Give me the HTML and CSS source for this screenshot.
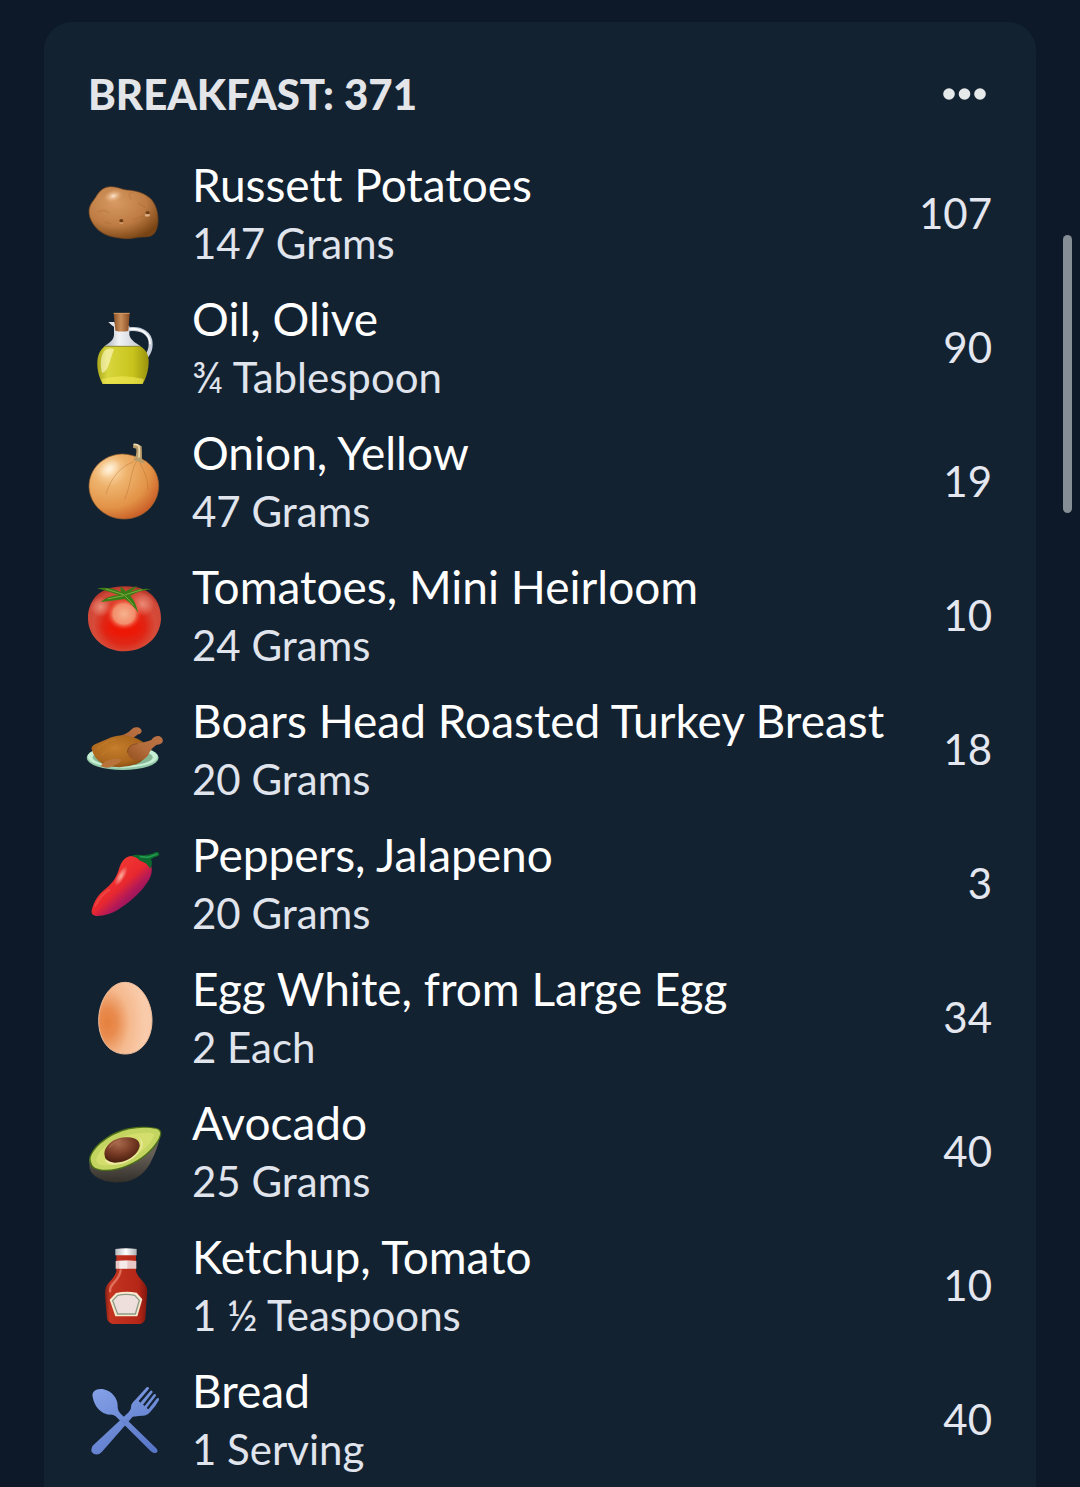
FILE: index.html
```html
<!DOCTYPE html>
<html lang="en">
<head>
    <meta charset="UTF-8">
    <meta name="viewport" content="width=device-width, initial-scale=1.0">
    <title>Food Log</title>
    <link rel="stylesheet" href="styles.css">
</head>
<body>
    <main class="meal-card">
        <header class="meal-header">
            <h1 class="meal-title">BREAKFAST: 371</h1>
            <button type="button" class="more-button" aria-label="More options">
                <svg width="50" height="24" viewBox="0 0 50 24" fill="currentColor" aria-hidden="true">
                    <circle cx="7" cy="12" r="5.8"/>
                    <circle cx="22.5" cy="12" r="5.8"/>
                    <circle cx="38" cy="12" r="5.8"/>
                </svg>
            </button>
        </header>

        <ul class="food-list">
            <li class="food">
                <svg class="food-icon" viewBox="54 13 228 252" aria-hidden="true">
                    <defs>
                        <radialGradient id="potatoSkin" cx="0.38" cy="0.3" r="0.75">
                            <stop offset="0" stop-color="#d79a62"/>
                            <stop offset="0.6" stop-color="#bd7b43"/>
                            <stop offset="1" stop-color="#784413"/>
                        </radialGradient>
                        <radialGradient id="potatoShine">
                            <stop offset="0" stop-color="#ffe6cf"/>
                            <stop offset="1" stop-color="#e0a873" stop-opacity="0"/>
                        </radialGradient>
                    </defs>
                    <path d="M57 128C57 108 70 97 78 84C88 66 102 54 122 54C140 53 152 61 170 64C196 65 224 73 243 91C258 108 265 132 264 158C263 179 256 197 242 202C226 207 208 203 192 208C170 213 148 208 126 204C102 199 82 186 68 164C60 151 57 140 57 128Z" fill="url(#potatoSkin)" stroke="#70421c" stroke-width="2"/>
                    <ellipse cx="130" cy="82" rx="30" ry="19" fill="url(#potatoShine)" transform="rotate(-18 130 82)"/>
                    <path d="M84 130q20-9 33 2M183 91q-12-18 4-20M206 104l20 12M190 153l28-10M105 161l17 4" fill="none" stroke="#8d5628" stroke-width="5" stroke-linecap="round" opacity="0.16"/>
                    <ellipse cx="154" cy="163" rx="6" ry="3" fill="#d49a68"/>
                    <ellipse cx="154" cy="156" rx="6" ry="5" fill="#6b3c16"/>
                    <ellipse cx="232" cy="140" rx="8" ry="4" fill="#dcae84"/>
                    <ellipse cx="233" cy="132" rx="6" ry="4" fill="#6b3c16"/>
                </svg>
                <div class="food-text">
                    <h2 class="food-name">Russett Potatoes</h2>
                    <p class="food-amount">147 Grams</p>
                </div>
                <span class="calories">107</span>
            </li>
            <li class="food">
                <svg class="food-icon" viewBox="54 24 228 252" aria-hidden="true">
                    <defs>
                        <linearGradient id="oilFill">
                            <stop offset="0" stop-color="#aaa81c"/>
                            <stop offset="0.2" stop-color="#d8d63e"/>
                            <stop offset="0.7" stop-color="#c8c31c"/>
                            <stop offset="1" stop-color="#99920f"/>
                        </linearGradient>
                        <linearGradient id="oilGlass">
                            <stop offset="0" stop-color="#a8afba"/>
                            <stop offset="0.4" stop-color="#f0f2f5"/>
                            <stop offset="1" stop-color="#c6cbd3"/>
                        </linearGradient>
                        <linearGradient id="oilCork">
                            <stop offset="0" stop-color="#8d5126"/>
                            <stop offset="0.45" stop-color="#c98f5a"/>
                            <stop offset="1" stop-color="#8a4c22"/>
                        </linearGradient>
                    </defs>
                    <path d="M175 91C215 86 243 103 242 136C242 152 237 162 230 171" fill="none" stroke="#c9d0db" stroke-width="12"/>
                    <path d="M178 90C213 86 241 104 240 136" fill="none" stroke="#fff" stroke-width="5"/>
                    <path d="M115 69L134 69L136 86Q126 81 115 69Z" fill="#e3e7ed"/>
                    <path d="M132 80H178V108C183 125 197 131 212 142H103C118 132 131 123 132 108Z" fill="url(#oilGlass)"/>
                    <path d="M105 141H210C228 152 236 167 236 187C236 213 229 236 218 255H98C88 236 81 215 82 188C83 166 91 152 105 141Z" fill="url(#oilFill)"/>
                    <path d="M105 142H210" stroke="#8d8c35" stroke-width="3"/>
                    <path d="M106 153C93 165 89 192 96 222C116 218 118 187 132 151Q118 145 106 153Z" fill="#fffbd0" opacity="0.6"/>
                    <path d="M96 240Q158 224 221 240L218 254H98Z" fill="#f4ea57" opacity="0.6"/>
                    <path d="M131 42H179L175 96Q154 100 136 95Z" fill="url(#oilCork)"/>
                    <path d="M131 43H179" stroke="#d39a66" stroke-width="3"/>
                </svg>
                <div class="food-text">
                    <h2 class="food-name">Oil, Olive</h2>
                    <p class="food-amount">¾ Tablespoon</p>
                </div>
                <span class="calories">90</span>
            </li>
            <li class="food">
                <svg class="food-icon" viewBox="54 21 228 252" aria-hidden="true">
                    <defs>
                        <radialGradient id="onionSkin" cx="0.3" cy="0.25" r="0.82">
                            <stop offset="0" stop-color="#ffe1b6"/>
                            <stop offset="0.3" stop-color="#eeb36d"/>
                            <stop offset="0.7" stop-color="#e29347"/>
                            <stop offset="1" stop-color="#c85b25"/>
                        </radialGradient>
                        <radialGradient id="onionShine">
                            <stop offset="0" stop-color="#fff6e4" stop-opacity="0.8"/>
                            <stop offset="1" stop-color="#fff6e4" stop-opacity="0"/>
                        </radialGradient>
                    </defs>
                    <path d="M57 158C57 104 100 62 157 60C178 60 196 67 216 75C249 92 266 121 266 156C265 212 220 255 162 255C103 254 59 211 57 158Z" fill="url(#onionSkin)" stroke="#98602d" stroke-width="2"/>
                    <path d="M190 84C158 94 124 126 108 180M200 82C182 110 184 150 164 196M209 82C216 106 236 126 233 168" fill="none" stroke="#b46e30" stroke-width="3" opacity="0.4"/>
                    <ellipse cx="118" cy="104" rx="36" ry="23" fill="url(#onionShine)" transform="rotate(-36 118 104)"/>
                    <path d="M190 30Q202 28 215 37Q216 54 216 76Q221 84 226 89Q207 84 189 78Q201 68 199 44L189 41Z" fill="#b89b6a"/>
                    <path d="M191 31Q202 30 207 37Q209 55 207 71" fill="none" stroke="#ead9ae" stroke-width="5"/>
                </svg>
                <div class="food-text">
                    <h2 class="food-name">Onion, Yellow</h2>
                    <p class="food-amount">47 Grams</p>
                </div>
                <span class="calories">19</span>
            </li>
            <li class="food">
                <svg class="food-icon" viewBox="54 16 228 252" aria-hidden="true">
                    <defs>
                        <radialGradient id="tomatoSkin" cx="0.5" cy="0.6" r="0.62">
                            <stop offset="0" stop-color="#e62a16"/>
                            <stop offset="0.45" stop-color="#e02515"/>
                            <stop offset="0.68" stop-color="#d64a38"/>
                            <stop offset="0.86" stop-color="#cf4838"/>
                            <stop offset="1" stop-color="#a83027"/>
                        </radialGradient>
                        <radialGradient id="tomatoGlow" cy="0.45">
                            <stop offset="0" stop-color="#f6b28e"/>
                            <stop offset="0.6" stop-color="#f38d6b"/>
                            <stop offset="1" stop-color="#ec2a15" stop-opacity="0"/>
                        </radialGradient>
                        <radialGradient id="tomatoShade">
                            <stop offset="0" stop-color="#f01200"/>
                            <stop offset="0.6" stop-color="#ec1806" stop-opacity="0.8"/>
                            <stop offset="1" stop-color="#e02515" stop-opacity="0"/>
                        </radialGradient>
                        <radialGradient id="tomatoShine">
                            <stop offset="0" stop-color="#f5ae9a" stop-opacity="0.65"/>
                            <stop offset="1" stop-color="#f5ae9a" stop-opacity="0"/>
                        </radialGradient>
                    </defs>
                    <path d="M54 147C54 96 83 61 132 53Q165 47 199 53C245 61 273 98 273 146C272 202 225 245 164 245C101 244 55 202 54 147Z" fill="url(#tomatoSkin)"/>
                    <ellipse cx="162" cy="173" rx="76" ry="46" fill="url(#tomatoShade)"/>
                    <ellipse cx="162" cy="138" rx="54" ry="50" fill="url(#tomatoGlow)"/>
                    <ellipse cx="218" cy="104" rx="36" ry="36" fill="url(#tomatoShine)"/>
                    <ellipse cx="92" cy="112" rx="32" ry="30" fill="url(#tomatoShine)"/>
                    <path d="M81 56Q118 50 152 67Q152 56 151 51Q163 57 166 65Q184 54 202 48Q194 59 180 66Q209 54 245 58Q209 62 181 78Q196 94 205 130Q189 105 165 88Q130 92 92 97Q111 79 147 76Q114 65 81 56Z" fill="#397d16"/>
                    <path d="M107 58L162 75L191 107M161 78L113 88M166 75L216 60" fill="none" stroke="#8fb548" stroke-width="3" opacity="0.8"/>
                </svg>
                <div class="food-text">
                    <h2 class="food-name">Tomatoes, Mini Heirloom</h2>
                    <p class="food-amount">24 Grams</p>
                </div>
                <span class="calories">10</span>
            </li>
            <li class="food">
                <svg class="food-icon" viewBox="54 -3 228 252" aria-hidden="true">
                    <defs>
                        <radialGradient id="turkeySkin" cx="0.42" cy="0.4" r="0.75">
                            <stop offset="0" stop-color="#c47d2a"/>
                            <stop offset="0.6" stop-color="#ad671e"/>
                            <stop offset="1" stop-color="#74400f"/>
                        </radialGradient>
                        <linearGradient id="turkeyLeg" x1="0" y1="1" x2="1" y2="0">
                            <stop offset="0" stop-color="#93501f"/>
                            <stop offset="0.5" stop-color="#b46c3c"/>
                            <stop offset="1" stop-color="#ba7145"/>
                        </linearGradient>
                    </defs>
                    <ellipse cx="158" cy="143" rx="108" ry="37" fill="#93c9a8"/>
                    <ellipse cx="158" cy="140" rx="105" ry="33" fill="#c6efd4"/>
                    <ellipse cx="158" cy="142" rx="90" ry="25" fill="#86b896"/>
                    <path d="M139 80Q169 75 186 57Q191 50 203 52Q214 55 215 63Q214 72 204 73Q191 81 178 98Z" fill="url(#turkeyLeg)"/>
                    <path d="M65 118Q63 109 75 103L112 87Q143 70 184 80Q225 88 233 122Q228 150 198 163Q151 179 109 166Q75 155 65 118Z" fill="url(#turkeySkin)"/>
                    <path d="M172 126Q174 105 196 100Q224 99 244 90Q252 77 267 78Q281 84 278 95Q275 103 260 104Q243 114 235 135Q224 153 199 152Q176 147 172 126Z" fill="url(#turkeyLeg)"/>
                    <path d="M92 169Q101 153 119 149Q138 143 155 149Q148 161 130 167Q114 178 92 169Z" fill="#b8733b"/>
                    <path d="M172 128Q173 103 203 101" fill="none" stroke="#7a4214" stroke-width="3" opacity="0.7"/>
                    <path d="M80 119Q102 95 138 87M94 137L107 125M124 118L140 106" fill="none" stroke="#d7943e" stroke-width="3" opacity="0.3"/>
                </svg>
                <div class="food-text">
                    <h2 class="food-name">Boars Head Roasted Turkey Breast</h2>
                    <p class="food-amount">20 Grams</p>
                </div>
                <span class="calories">18</span>
            </li>
            <li class="food">
                <svg class="food-icon" viewBox="54 9 228 252" aria-hidden="true">
                    <defs>
                        <linearGradient id="pepperSkin" x1="0.25" y1="0.2" x2="0.8" y2="0.8">
                            <stop offset="0" stop-color="#f43a32"/>
                            <stop offset="0.48" stop-color="#e8282f"/>
                            <stop offset="0.7" stop-color="#b31958"/>
                            <stop offset="1" stop-color="#80105f"/>
                        </linearGradient>
                        <radialGradient id="pepperShine">
                            <stop offset="0" stop-color="#ffc0ad" stop-opacity="0.9"/>
                            <stop offset="1" stop-color="#ffc0ad" stop-opacity="0"/>
                        </radialGradient>
                    </defs>
                    <path d="M178 49C162 53 153 69 147 87C137 120 124 132 99 153C78 171 69 194 65 212C64 222 69 227 82 228C104 227 124 222 143 210C178 188 207 163 228 133C243 113 249 94 243 75C232 50 208 43 178 49Z" fill="url(#pepperSkin)"/>
                    <ellipse cx="153" cy="108" rx="34" ry="12" fill="url(#pepperShine)" transform="rotate(-60 153 108)"/>
                    <path d="M76 197Q92 164 118 150" fill="none" stroke="#ff7967" stroke-width="6" stroke-linecap="round" opacity="0.3"/>
                    <path d="M184 48Q194 43 213 45Q231 47 251 40Q256 34 265 37Q272 45 263 49Q254 50 243 58Q250 70 240 86Q231 67 210 62Q201 51 184 48Z" fill="#0d692e"/>
                    <path d="M209 50L234 52L262 42" fill="none" stroke="#249b50" stroke-width="5"/>
                </svg>
                <div class="food-text">
                    <h2 class="food-name">Peppers, Jalapeno</h2>
                    <p class="food-amount">20 Grams</p>
                </div>
                <span class="calories">3</span>
            </li>
            <li class="food">
                <svg class="food-icon" viewBox="54 21 228 252" aria-hidden="true">
                    <defs>
                        <radialGradient id="eggShell" gradientUnits="userSpaceOnUse" cx="0" cy="0" r="1" gradientTransform="translate(112 158) scale(112 170)">
                            <stop offset="0" stop-color="#e5803f"/>
                            <stop offset="0.25" stop-color="#e98c4f"/>
                            <stop offset="0.6" stop-color="#f5b98e"/>
                            <stop offset="1" stop-color="#f9cbaa"/>
                        </radialGradient>
                    </defs>
                    <path d="M165 37C120 37 86 94 86 151C86 212 119 252 166 252C213 252 246 209 246 151C246 94 211 37 165 37Z" fill="url(#eggShell)" stroke="#eebd9a" stroke-width="3"/>
                </svg>
                <div class="food-text">
                    <h2 class="food-name">Egg White, from Large Egg</h2>
                    <p class="food-amount">2 Each</p>
                </div>
                <span class="calories">34</span>
            </li>
            <li class="food">
                <svg class="food-icon" viewBox="54 2 228 252" aria-hidden="true">
                    <defs>
                        <linearGradient id="avocadoSkin" x1="0" y1="0" x2="0" y2="1">
                            <stop offset="0.4" stop-color="#666057"/>
                            <stop offset="1" stop-color="#332f2a"/>
                        </linearGradient>
                        <radialGradient id="avocadoPit" cx="0.4" cy="0.25" r="0.8">
                            <stop offset="0" stop-color="#a8694c"/>
                            <stop offset="0.5" stop-color="#793c25"/>
                            <stop offset="1" stop-color="#42180c"/>
                        </radialGradient>
                    </defs>
                    <path d="M57 148L270 72C268 99 256 130 240 160C222 192 191 214 151 216C104 219 64 199 59 174Z" fill="url(#avocadoSkin)"/>
                    <path d="M58 154C53 127 92 86 137 66C175 48 224 46 260 53C278 58 277 73 266 92C248 124 216 150 175 167C138 185 94 186 72 175Q61 168 58 154Z" fill="#4c6f18"/>
                    <path d="M62 149C60 127 93 92 137 71C174 53 221 48 259 56C275 61 272 75 262 91C244 120 214 146 174 163C137 180 94 182 75 172Q64 165 62 149Z" fill="#c3d560"/>
                    <path d="M80 144C87 116 128 86 166 77C205 65 247 65 253 72C246 102 206 135 170 148C133 165 98 170 84 160Q77 155 80 144Z" fill="#d3de6c"/>
                    <path d="M112 149C145 169 185 148 210 118Q219 99 207 84Q224 93 215 114C200 143 165 166 127 163Q110 160 104 149Z" fill="#f0e9a4"/>
                    <path d="M103 131C103 106 130 83 165 81C194 78 210 89 209 107C203 136 168 157 134 157Q104 155 103 131Z" fill="url(#avocadoPit)"/>
                    <path d="M118 113Q130 94 153 89" fill="none" stroke="#c48362" stroke-width="4" opacity="0.4"/>
                </svg>
                <div class="food-text">
                    <h2 class="food-name">Avocado</h2>
                    <p class="food-amount">25 Grams</p>
                </div>
                <span class="calories">40</span>
            </li>
            <li class="food">
                <svg class="food-icon" viewBox="54 27 228 252" aria-hidden="true">
                    <defs>
                        <linearGradient id="ketchupGlass">
                            <stop offset="0" stop-color="#7c1f13"/>
                            <stop offset="0.12" stop-color="#c43420"/>
                            <stop offset="0.8" stop-color="#b42617"/>
                            <stop offset="1" stop-color="#7f170f"/>
                        </linearGradient>
                        <linearGradient id="ketchupCap">
                            <stop offset="0" stop-color="#b7babd"/>
                            <stop offset="0.5" stop-color="#fff"/>
                            <stop offset="1" stop-color="#aeb0b4"/>
                        </linearGradient>
                    </defs>
                    <path d="M139 55H198V106C202 122 222 137 229 152Q233 161 231 176L226 247Q225 260 211 264H127Q113 260 111 247L105 176Q104 161 109 151C117 137 136 123 139 106Z" fill="url(#ketchupGlass)"/>
                    <path d="M152 103Q150 121 130 142Q120 152 120 166" fill="none" stroke="#ffad96" stroke-width="7" stroke-linecap="round" opacity="0.5"/>
                    <path d="M137 75Q168 70 199 75V98H137Z" fill="#e9c9c7"/>
                    <path d="M148 75H172V98H148Z" fill="#fff" opacity="0.6"/>
                    <path d="M136 39Q168 34 200 39V58H136Z" fill="url(#ketchupCap)"/>
                    <path d="M138 171Q168 164 200 170L217 190L202 241H136L119 191Z" fill="#f8e8ce"/>
                    <path d="M143 178Q168 172 194 178L208 193L196 234H143L128 194Z" fill="#eedfdd" stroke="#8b9b84" stroke-width="4"/>
                </svg>
                <div class="food-text">
                    <h2 class="food-name">Ketchup, Tomato</h2>
                    <p class="food-amount">1 ½ Teaspoons</p>
                </div>
                <span class="calories">10</span>
            </li>
            <li class="food">
                <svg class="food-icon" viewBox="54 24 228 252" aria-hidden="true">
                    <defs>
                        <linearGradient id="cutlery" gradientUnits="userSpaceOnUse" x1="100" y1="50" x2="210" y2="250">
                            <stop offset="0" stop-color="#839fe6"/>
                            <stop offset="1" stop-color="#5977c8"/>
                        </linearGradient>
                    </defs>
                    <g fill="url(#cutlery)">
                        <path d="M230 49Q237 46 237 53L206 90L211 95L241 60Q247 56 248 64L219 101L224 105L252 70Q258 67 258 74L230 111L235 115L261 82Q268 79 267 87Q257 106 240 124Q230 136 214 134L188 137L96 242Q86 254 72 249Q58 241 68 224L176 124Q185 112 184 101Q190 91 198 84Z"/>
                        <path d="M68 78C64 59 82 51 101 55C126 61 143 82 143 104Q142 118 152 128L258 231Q267 241 259 245Q250 248 241 239L137 136Q130 130 117 131C94 129 73 107 68 78Z"/>
                    </g>
                    <path d="M151 143L164 157L176 143" fill="none" stroke="#405fa9" stroke-width="2" opacity="0.4"/>
                </svg>
                <div class="food-text">
                    <h2 class="food-name">Bread</h2>
                    <p class="food-amount">1 Serving</p>
                </div>
                <span class="calories">40</span>
            </li>
        </ul>
    </main>
    <div class="scroll-thumb" aria-hidden="true"></div>
</body>
</html>
```

FILE: styles.css
```css
* {
    box-sizing: border-box;
}
body {
    display: flex;
    flex-direction: column;
    min-height: 100vh;
    margin: 0;
    padding: 22px 44px 0;
    background: #0d1928;
    color: #fff;
    font-family: Lato, "Noto Sans", sans-serif;
    font-variant-ligatures: none;
}
h1, h2, p {
    margin: 0;
}
.meal-card {
    flex: 1;
    padding: 44px 44px 0;
    background: #132231;
    border-radius: 28px 28px 0 0;
}
.meal-header {
    display: flex;
    align-items: center;
    justify-content: space-between;
    margin-bottom: 35px;
}
.meal-title {
    color: #e3e5e9;
    font-size: 42px;
    font-weight: 900;
    line-height: 56px;
}
.more-button {
    padding: 0;
    border: none;
    background: none;
    color: #e6e9ea;
    cursor: pointer;
}
.more-button svg {
    display: block;
}
.food-list {
    display: flex;
    flex-direction: column;
    gap: 18px;
    margin: 0;
    padding: 0;
    list-style: none;
}
.food {
    display: flex;
    align-items: center;
    gap: 28px;
}
.food-icon {
    flex: none;
    width: 76px;
    height: 84px;
    overflow: visible;
}
.food-text {
    flex: 1;
}
.food-name {
    font-size: 46px;
    font-weight: 400;
    line-height: 56px;
}
.food-amount {
    color: #e0e4ec;
    font-size: 42px;
    line-height: 60px;
}
.calories {
    padding-bottom: 4px;
    color: #e4e7ef;
    font-size: 42px;
    line-height: 56px;
}
/* overlay scroll indicator */
.scroll-thumb {
    position: fixed;
    top: 235px;
    right: 8px;
    width: 9px;
    height: 278px;
    border-radius: 5px;
    background: #858d95;
}
```
